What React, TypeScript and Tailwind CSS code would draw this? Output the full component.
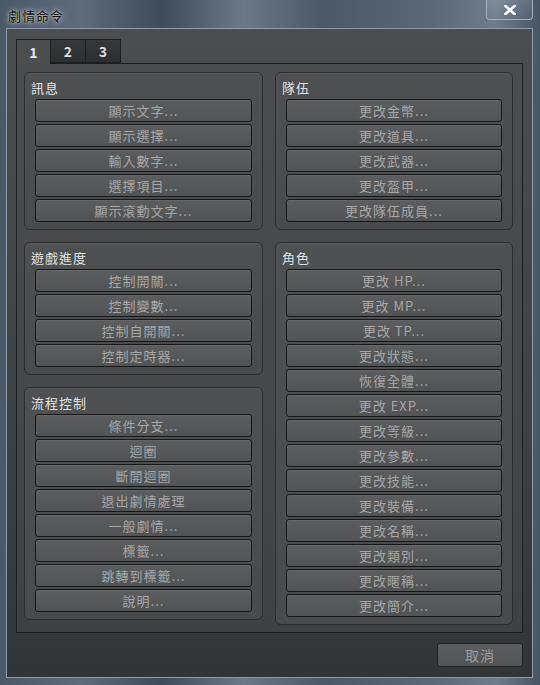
const font = { fontFamily: '"Noto Sans CJK TC", "Noto Sans", sans-serif' }

const groups = {
  message: { title: '訊息', items: ['顯示文字...', '顯示選擇...', '輸入數字...', '選擇項目...', '顯示滾動文字...'] },
  progress: { title: '遊戲進度', items: ['控制開關...', '控制變數...', '控制自開關...', '控制定時器...'] },
  flow: {
    title: '流程控制',
    items: ['條件分支...', '迴圈', '斷開迴圈', '退出劇情處理', '一般劇情...', '標籤...', '跳轉到標籤...', '說明...'],
  },
  party: { title: '隊伍', items: ['更改金幣...', '更改道具...', '更改武器...', '更改盔甲...', '更改隊伍成員...'] },
  actor: {
    title: '角色',
    items: [
      '更改 HP...',
      '更改 MP...',
      '更改 TP...',
      '更改狀態...',
      '恢復全體...',
      '更改 EXP...',
      '更改等級...',
      '更改參數...',
      '更改技能...',
      '更改裝備...',
      '更改名稱...',
      '更改類別...',
      '更改暱稱...',
      '更改簡介...',
    ],
  },
}

function CommandButton({ label }: { label: string }) {
  return (
    <button className="h-[23px] w-full rounded-[3px] border border-[#161718] bg-[linear-gradient(to_bottom,#5b5d5f,#515355)] text-[13px] leading-none tracking-[1px] text-[#a6a6a6] shadow-[inset_0_1px_0_rgba(255,255,255,0.06)]">
      {label}
    </button>
  )
}

function GroupBox({ title, items }: { title: string; items: string[] }) {
  return (
    <div className="rounded-[6px] border border-[#2b2d2f] bg-[linear-gradient(to_bottom,#4e5052,#484a4c)] shadow-[inset_0_1px_0_rgba(255,255,255,0.05)]">
      <div className="flex h-[26px] items-center pl-[6px] pt-[3px] text-[13px] tracking-[1px] text-[#e2e2e2]">
        {title}
      </div>
      <div className="flex flex-col gap-[2px] px-[10px] pb-[7px]">
        {items.map((it) => (
          <CommandButton key={it} label={it} />
        ))}
      </div>
    </div>
  )
}

export default function App() {
  return (
    <div
      style={font}
      className="flex h-[685px] w-[540px] flex-col bg-[linear-gradient(90deg,#4a5868_0%,#5d6b7b_15%,#3e4b5b_30%,#6a7888_45%,#4a5868_60%,#5a6878_80%,#6e7c8c_92%,#465464_100%)] pb-[7px] pl-[6px] pr-[7px]"
    >
      <div className="flex h-[28px] items-start justify-between">
        <span className="mt-[6px] pl-[2px] text-[13px] tracking-[1px] text-[#111] [text-shadow:0_0_6px_rgba(255,255,255,0.8),0_0_2px_rgba(255,255,255,0.6)]">
          劇情命令
        </span>
        <div className="flex h-[20px] w-[47px] items-center justify-center rounded-b-[4px] border border-t-0 border-[#9fb0c2] bg-[linear-gradient(to_bottom,rgba(255,255,255,0.12),rgba(255,255,255,0.02))]">
          <svg width="12" height="10" viewBox="0 0 12 10">
            <path d="M1.5 1L10.5 9M10.5 1L1.5 9" stroke="#fff" strokeWidth="2.6" strokeLinecap="square" />
          </svg>
        </div>
      </div>

      <div className="flex flex-1 flex-col border border-[#8c9cae] bg-[linear-gradient(to_bottom,#4b4d4f,#3f4244_60%,#323537)] pb-[9px] pl-[9px] pr-[9px] pt-[10px]">
        <div className="flex items-end">
          <div className="relative z-10 -mb-px flex h-[25px] w-[35px] items-center justify-center border border-b-0 border-[#1c1e20] bg-[#4b4d4f] text-[14px] font-bold text-[#e6e6e6]">
            1
          </div>
          <div className="flex h-[24px] w-[35px] items-center justify-center border border-l-0 border-[#1c1e20] bg-[linear-gradient(to_bottom,#36393b,#2c2f31)] text-[14px] font-bold text-[#dcdcdc]">
            2
          </div>
          <div className="flex h-[24px] w-[35px] items-center justify-center border border-l-0 border-[#1c1e20] bg-[linear-gradient(to_bottom,#36393b,#2c2f31)] text-[14px] font-bold text-[#dcdcdc]">
            3
          </div>
        </div>

        <div className="flex h-[570px] gap-[12px] border border-[#1c1e20] bg-[linear-gradient(to_bottom,#4a4c4e,#444649_70%,#3f4244)] pl-[7px] pr-[9px] pt-[8px]">
          <div className="flex w-[239px] flex-col gap-[12px]">
            <GroupBox {...groups.message} />
            <GroupBox {...groups.progress} />
            <GroupBox {...groups.flow} />
          </div>
          <div className="flex w-[238px] flex-col gap-[12px]">
            <GroupBox {...groups.party} />
            <GroupBox {...groups.actor} />
          </div>
        </div>

        <div className="mt-[10px] flex justify-end">
          <button className="h-[24px] w-[86px] rounded-[3px] border border-[#1e2022] bg-[linear-gradient(to_bottom,#5a5c5e,#525456)] text-[14px] tracking-[1px] text-[#9c9c9c]">
            取消
          </button>
        </div>
      </div>
    </div>
  )
}
